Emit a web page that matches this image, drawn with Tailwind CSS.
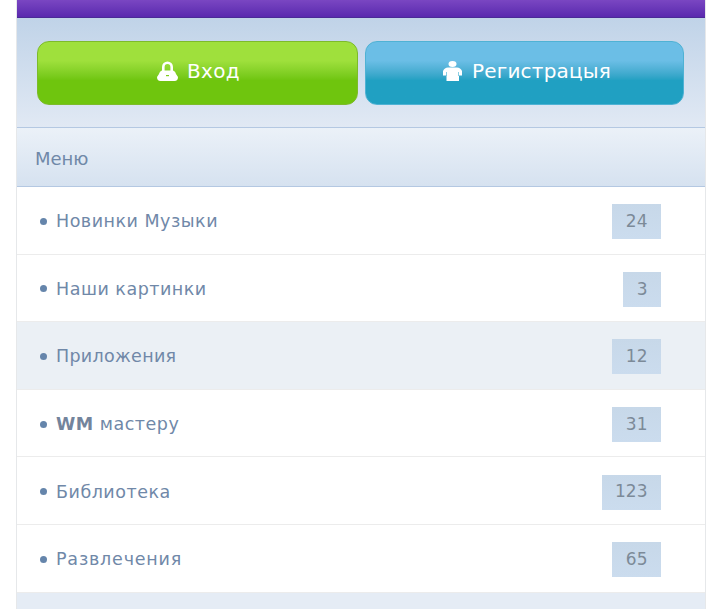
<!DOCTYPE html>
<html lang="ru">

<head>
  <meta charset="UTF-8" />
  <meta name="viewport" content="width=device-width, initial-scale=1.0" />
  <title>Меню</title>
  <script src="https://cdn.jsdelivr.net/npm/@tailwindcss/browser@4"></script>
</head>

<body class="bg-white h-[609px] overflow-hidden font-['DejaVu_Sans',sans-serif]">

  <div class="ml-4 w-[690px] h-[609px] border-x border-[#e6e8ea] overflow-hidden">
    <div class="h-[18px] bg-gradient-to-b from-[#7a46c2] to-[#5a28ae] border-b border-[#4a2a96]"></div>

    <div class="h-[110px] bg-gradient-to-b from-[#c0d3e8] to-[#e1e9f4] flex gap-[7px] pt-[23px] pl-5 pr-5 border-b border-[#b4c8e2]">
      <a class="w-[321px] h-[64px] rounded-xl border border-[#7dbb2a] bg-gradient-to-b from-[#9fe03c] from-30% to-[#6fc50e] to-62% flex items-center justify-center gap-[9px] pl-[2px] pb-[4px] text-white text-[20px] tracking-[0.4px]">
        <svg width="21" height="20" viewBox="0 0 21 20" fill="#fff">
          <path d="M5 11V6a5.500 5.500 0 0 1 11 0v5h-2.600V6a2.900 2.900 0 0 0-5.800 0v5z" />
          <path d="M5.500 9.500h10q2.500 0 3.500 3.500l2 3q0 4-3.500 4h-14Q0 20 0 16l2-3q1-3.500 3.500-3.500z" />
          <rect x="9" y="14" width="3" height="1.200" fill="#7fcb1c" />
        </svg>
        <span>Вход</span>
      </a>
      <a class="w-[319px] h-[64px] rounded-xl border border-[#4fb2d4] bg-gradient-to-b from-[#6bbee6] from-30% to-[#20a0c2] to-62% flex items-center justify-center gap-[10px] pl-[5px] pb-[4px] text-white text-[20px] tracking-[0.2px]">
        <svg width="19" height="20" viewBox="0 0 19 20" fill="#fff">
          <ellipse cx="9.500" cy="3" rx="4" ry="3" />
          <path d="M5 6.500h9q3.500 0 5 3.500v4.500h-3V20H3.500v-5.500H0V10q1.500-3.500 5-3.500z" />
          <rect x="3.200" y="11" width=".6" height="4" fill="#3fb0d2" />
          <rect x="15.200" y="11" width=".6" height="4" fill="#3fb0d2" />
        </svg>
        <span>Регистрацыя</span>
      </a>
    </div>

    <div class="h-[59px] bg-gradient-to-b from-[#ebf1f8] to-[#d6e2f0] border-b border-[#b4c8e2] flex items-center pl-[18px] pt-[3px] text-[18px] text-[#7088a8]">Меню</div>

    <ul>
      <li class="h-[67.6px] bg-white border-b border-[#ececec] flex items-center justify-between pl-[23px] pr-[44px] pt-[2px] text-[17.5px] tracking-[0.5px] text-[#7088a8]">
        <span class="flex items-center"><i class="w-[7px] h-[7px] rounded-full bg-[#6585ab] mr-[9px]"></i>Новинки Музыки</span>
        <span class="h-[35px] mt-[1px] px-[13.5px] flex items-center bg-gradient-to-b from-[#c7d8e9] to-[#cbdcee] text-[#7c8a98] text-[17px] tracking-normal">24</span>
      </li>
      <li class="h-[67.6px] bg-white border-b border-[#ececec] flex items-center justify-between pl-[23px] pr-[44px] pt-[2px] text-[17.5px] tracking-[0.5px] text-[#7088a8]">
        <span class="flex items-center"><i class="w-[7px] h-[7px] rounded-full bg-[#6585ab] mr-[9px]"></i>Наши картинки</span>
        <span class="h-[35px] mt-[1px] px-[13.5px] flex items-center bg-gradient-to-b from-[#c7d8e9] to-[#cbdcee] text-[#7c8a98] text-[17px] tracking-normal">3</span>
      </li>
      <li class="h-[67.6px] bg-[#ebf0f5] border-b border-[#ececec] flex items-center justify-between pl-[23px] pr-[44px] pt-[2px] text-[17.5px] tracking-[0.3px] text-[#7088a8]">
        <span class="flex items-center"><i class="w-[7px] h-[7px] rounded-full bg-[#6585ab] mr-[9px]"></i>Приложения</span>
        <span class="h-[35px] mt-[1px] px-[13.5px] flex items-center bg-gradient-to-b from-[#c7d8e9] to-[#cbdcee] text-[#7c8a98] text-[17px] tracking-normal">12</span>
      </li>
      <li class="h-[67.6px] bg-white border-b border-[#ececec] flex items-center justify-between pl-[23px] pr-[44px] pt-[2px] text-[17.5px] tracking-[0.5px] text-[#7088a8]">
        <span class="flex items-center whitespace-pre"><i class="w-[7px] h-[7px] rounded-full bg-[#6585ab] mr-[9px]"></i><b class="font-bold text-[#73849c]">WM</b> мастеру</span>
        <span class="h-[35px] mt-[1px] px-[13.5px] flex items-center bg-gradient-to-b from-[#c7d8e9] to-[#cbdcee] text-[#7c8a98] text-[17px] tracking-normal">31</span>
      </li>
      <li class="h-[67.6px] bg-white border-b border-[#ececec] flex items-center justify-between pl-[23px] pr-[44px] pt-[2px] text-[17.5px] tracking-[0.5px] text-[#7088a8]">
        <span class="flex items-center"><i class="w-[7px] h-[7px] rounded-full bg-[#6585ab] mr-[9px]"></i>Библиотека</span>
        <span class="h-[35px] mt-[1px] px-[13.5px] flex items-center bg-gradient-to-b from-[#c7d8e9] to-[#cbdcee] text-[#7c8a98] text-[17px] tracking-normal">123</span>
      </li>
      <li class="h-[67.6px] bg-white border-b border-[#ececec] flex items-center justify-between pl-[23px] pr-[44px] pt-[2px] text-[17.5px] tracking-[0.8px] text-[#7088a8]">
        <span class="flex items-center"><i class="w-[7px] h-[7px] rounded-full bg-[#6585ab] mr-[9px]"></i>Развлечения</span>
        <span class="h-[35px] mt-[1px] px-[13.5px] flex items-center bg-gradient-to-b from-[#c7d8e9] to-[#cbdcee] text-[#7c8a98] text-[17px] tracking-normal">65</span>
      </li>
    </ul>

    <div class="h-[20px] bg-[#e5ecf5]"></div>
  </div>

</body>

</html>
